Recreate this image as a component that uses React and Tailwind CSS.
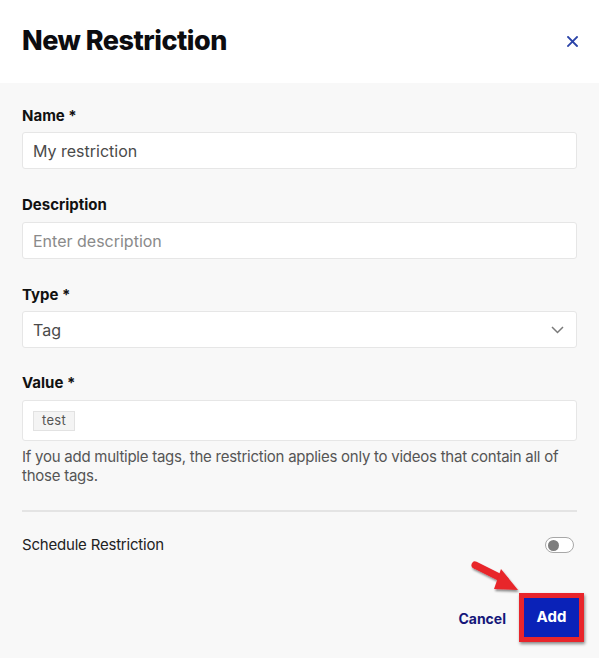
import React from "react";

function Label({ children }) {
  return <div className="text-[15px] leading-[18px] font-bold text-[#111]">{children}</div>;
}

export default function App() {
  return (
    <div className="w-[599px] h-[658px] bg-[#f8f8f8] overflow-hidden font-['Inter',sans-serif]">
      {/* header */}
      <div className="h-[83px] bg-white flex items-center justify-between pl-[22px] pr-[21px]">
        <h1 className="text-[27px] font-extrabold tracking-[-0.5px] text-[#0c0c10] pb-[1px]">New Restriction</h1>
        <button className="w-[12px] h-[12px] flex items-center justify-center">
          <svg width="11" height="11" viewBox="0 0 11 11">
            <path d="M1 1 L10 10 M10 1 L1 10" stroke="#2a43a8" strokeWidth="1.8" strokeLinecap="square" />
          </svg>
        </button>
      </div>

      {/* form */}
      <div className="px-[22px] pt-[24px]">
        <Label>Name *</Label>
        <div className="mt-[7px] h-[37px] bg-white border border-[#e6e6e6] rounded-[3px] flex items-center px-[10px] text-[16px] text-[#4a4a4a]">
          My restriction
        </div>

        <div className="mt-[27px]">
          <Label>Description</Label>
        </div>
        <div className="mt-[8px] h-[37px] bg-white border border-[#e6e6e6] rounded-[3px] flex items-center px-[10px] text-[16px] text-[#8a8a8a]">
          Enter description
        </div>

        <div className="mt-[27px]">
          <Label>Type *</Label>
        </div>
        <div className="mt-[7px] h-[37px] bg-white border border-[#e6e6e6] rounded-[3px] flex items-center justify-between pl-[10px] pr-[12px] text-[16px] text-[#4a4a4a]">
          <span>Tag</span>
          <svg width="13" height="8" viewBox="0 0 13 8">
            <path d="M1 1 L6.5 6.5 L12 1" fill="none" stroke="#7a7a7a" strokeWidth="1.5" />
          </svg>
        </div>

        <div className="mt-[26px]">
          <Label>Value *</Label>
        </div>
        <div className="mt-[8px] h-[41px] bg-white border border-[#e6e6e6] rounded-[3px] flex items-center px-[10px]">
          <span className="h-[20px] px-[8px] flex items-center bg-[#f4f4f4] border border-[#e2e2e2] text-[13px] text-[#555] tracking-[0.3px]">
            test
          </span>
        </div>
        <p className="mt-[6px] text-[15px] leading-[19px] tracking-[-0.25px] text-[#555]">
          If you add multiple tags, the restriction applies only to videos that contain all of those tags.
        </p>

        <div className="mt-[25px] h-[2px] bg-[#e4e4e4]" />

        <div className="mt-[24px] flex items-center justify-between pr-[3px]">
          <span className="text-[15px] leading-[18px] tracking-[-0.2px] text-[#222]">Schedule Restriction</span>
          <div className="w-[29px] h-[16px] rounded-full border-[1.5px] border-[#a8a8a8] bg-white flex items-center pl-[1.5px]">
            <div className="w-[11px] h-[11px] rounded-full bg-[#7d7d7d]" />
          </div>
        </div>

        {/* footer */}
        <div className="relative mt-[39px] flex items-center justify-end gap-[13px]">
          <span className="text-[14px] font-bold text-[#15177a] pt-[1px]">Cancel</span>
          <div className="border-[5px] border-[#e8252b] shadow-[1px_2px_3px_rgba(0,0,0,0.45)] mr-[-7px]">
            <button className="w-[55px] h-[39px] bg-[#0a22b8] text-white text-[15px] font-bold">Add</button>
          </div>
          <svg className="absolute left-[447px] top-[-34px]" width="54" height="40" viewBox="0 0 54 40">
            <defs>
              <filter id="sh" x="-20%" y="-20%" width="150%" height="150%">
                <feDropShadow dx="1" dy="2" stdDeviation="1.2" floodColor="#000" floodOpacity="0.45" />
              </filter>
            </defs>
            <g filter="url(#sh)">
              <path d="M6 6 L36 21" stroke="#e8252b" strokeWidth="7" strokeLinecap="round" />
              <path d="M32 10 L49 31 L25 30 Z" fill="#e8252b" />
            </g>
          </svg>
        </div>
      </div>
    </div>
  );
}
